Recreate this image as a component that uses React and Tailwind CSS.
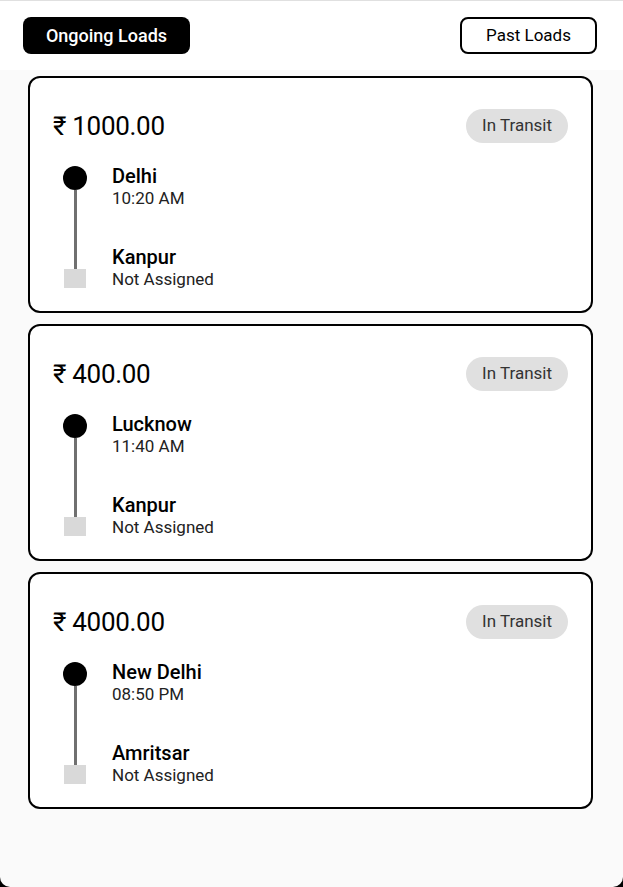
import React from "react";

const loads = [
  { id: 1, price: "1000.00", from: "Delhi", time: "10:20 AM", to: "Kanpur" },
  { id: 2, price: "400.00", from: "Lucknow", time: "11:40 AM", to: "Kanpur" },
  { id: 3, price: "4000.00", from: "New Delhi", time: "08:50 PM", to: "Amritsar" },
];

function LoadCard({ load }) {
  return (
    <div className="bg-white border-2 border-black rounded-[12px] pl-[23px] pr-[23px] pt-[31px] pb-[22px]">
      <div className="flex items-center justify-between h-[34px]">
        <span className="text-[26px] text-black tracking-[-0.3px]">₹ {load.price}</span>
        <span className="h-[34px] px-[16px] flex items-center rounded-full bg-[#e0e0e0] text-[17px] text-[#333]">
          In Transit
        </span>
      </div>
      <div className="flex mt-[21px]">
        <div className="w-[44px] flex flex-col items-center pt-[2px]">
          <div className="w-[24px] h-[24px] rounded-full bg-black" />
          <div className="w-[3px] h-[79px] bg-[#707070]" />
          <div className="w-[22px] h-[19px] bg-[#d9d9d9]" />
        </div>
        <div className="ml-[15px] flex flex-col">
          <span className="text-[20px] leading-[24px] font-medium text-black">{load.from}</span>
          <span className="text-[17px] leading-[20px] text-[#222]">{load.time}</span>
          <span className="mt-[37px] text-[20px] leading-[24px] font-medium text-black">{load.to}</span>
          <span className="text-[17px] leading-[20px] text-[#222]">Not Assigned</span>
        </div>
      </div>
    </div>
  );
}

export default function App() {
  return (
    <div className="bg-black min-h-[887px]" style={{ fontFamily: "Roboto, 'Liberation Sans', sans-serif" }}>
      <div className="bg-[#fafafa] min-h-[887px] rounded-b-[10px] border-t border-[#e0e0e0]">
        <div className="bg-white h-[69px] flex items-center justify-between pl-[23px] pr-[26px]">
          <button className="h-[37px] w-[167px] bg-black text-white rounded-[8px] text-[18px] font-medium">
            Ongoing Loads
          </button>
          <button className="h-[37px] w-[137px] border-2 border-black rounded-[8px] text-[17px] text-black bg-white">
            Past Loads
          </button>
        </div>
        <div className="flex flex-col gap-[11px] pt-[6px] pl-[28px] pr-[30px]">
          {loads.map((l) => (
            <LoadCard key={l.id} load={l} />
          ))}
        </div>
      </div>
    </div>
  );
}
